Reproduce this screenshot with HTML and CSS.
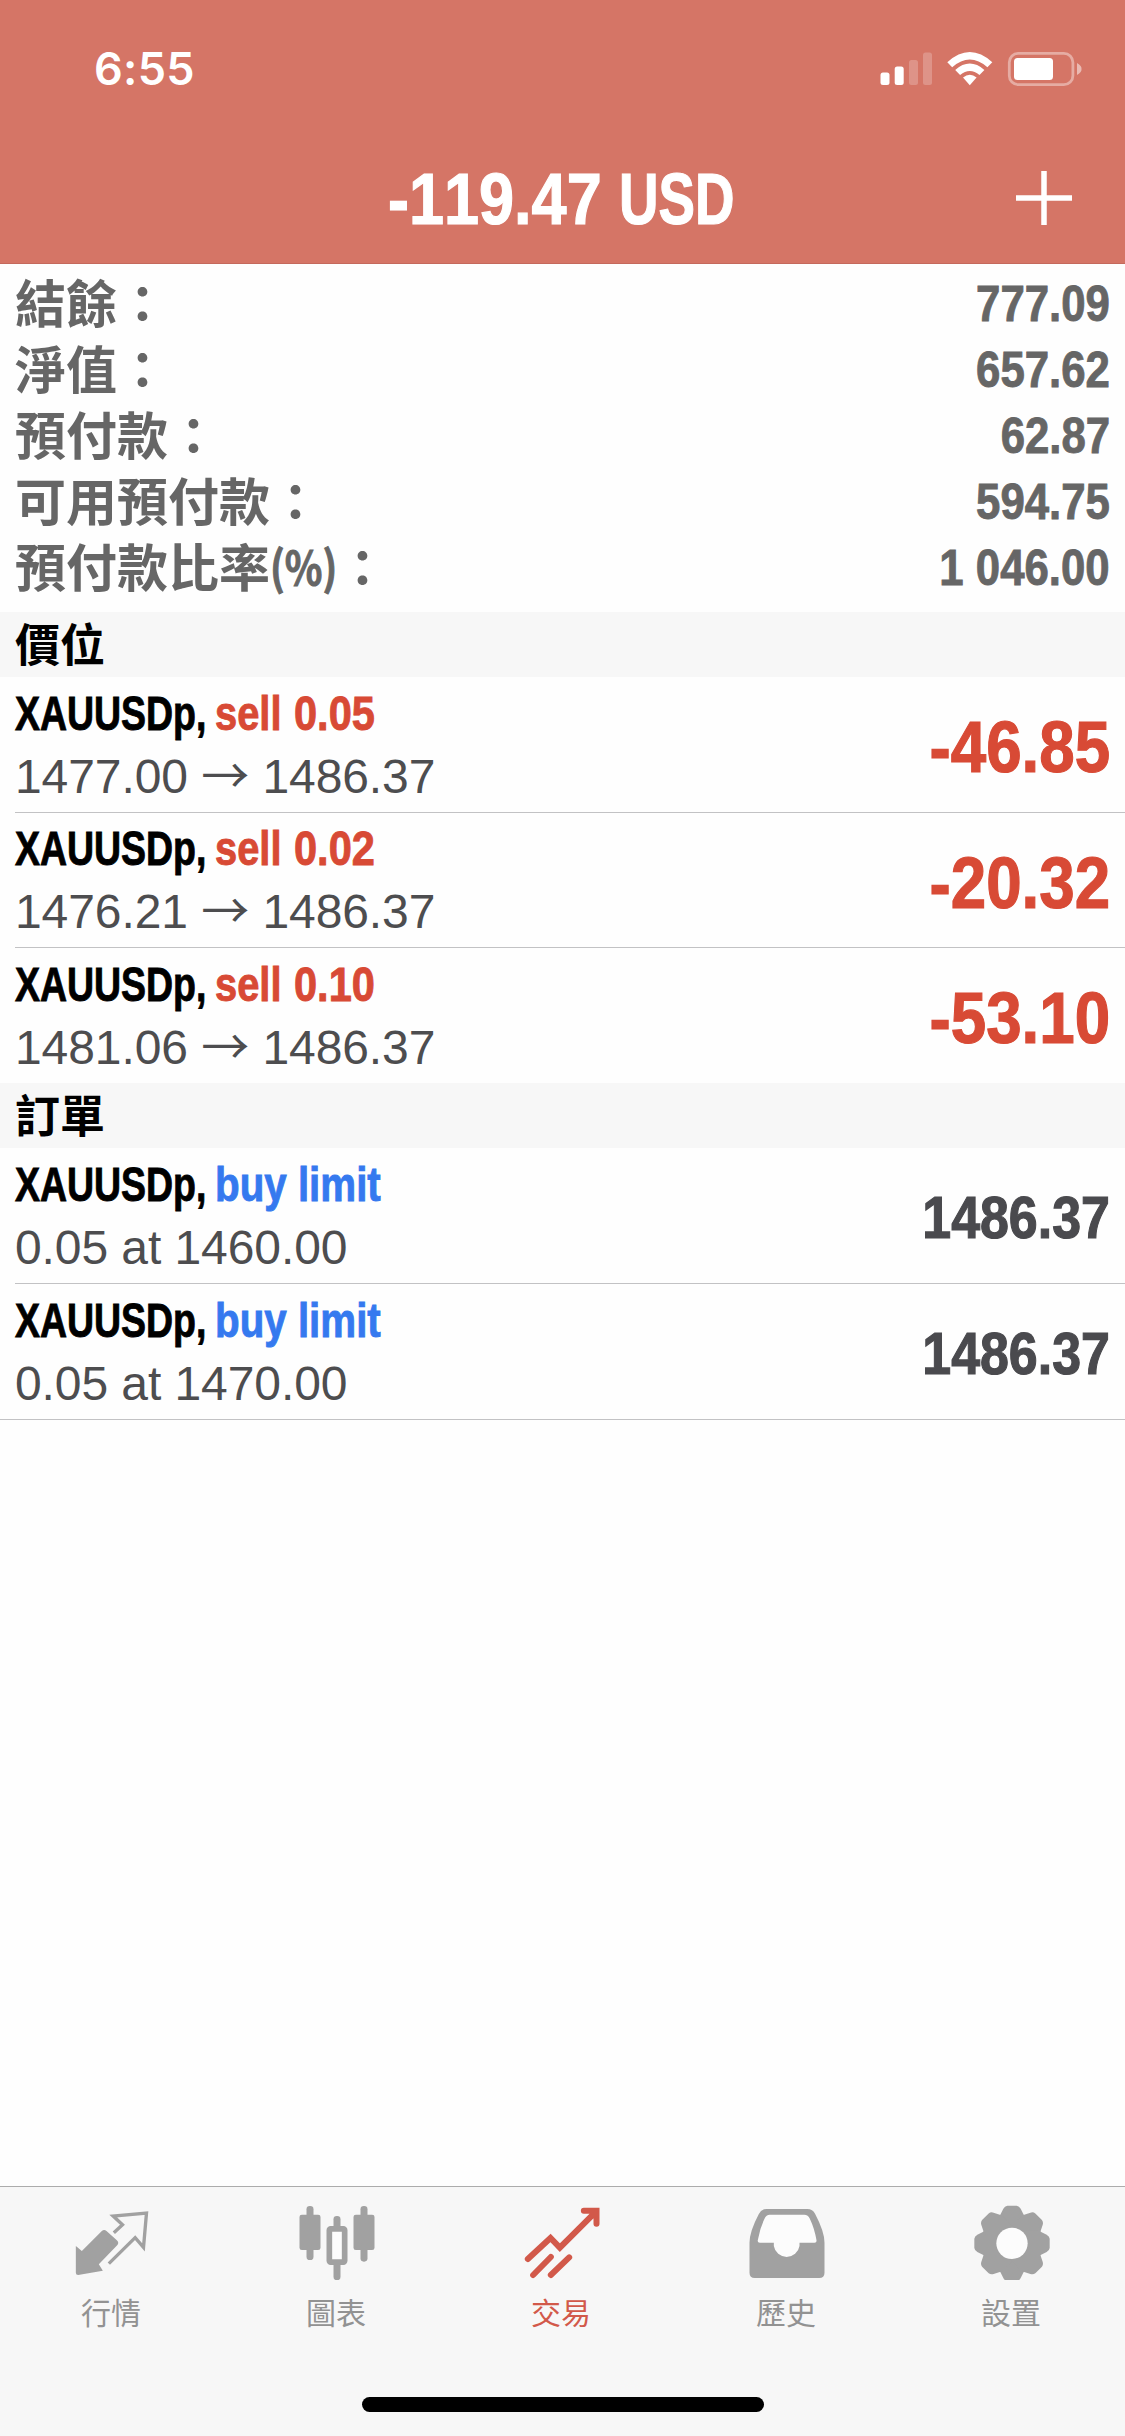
FILE: index.html
```html
<!DOCTYPE html>
<html lang="zh-Hant">
<head>
<meta charset="utf-8">
<title>交易</title>
<link rel="stylesheet" href="styles.css">
</head>
<body>
<div class="screen">
  <header class="header">
    <div class="status">
      <span class="clock">6:55</span>
      <svg class="status-icons" viewBox="0 0 204 36" fill="#fff">
        <rect x="0.5" y="21.5" width="9" height="12.5" rx="2.5"/>
        <rect x="14.7" y="15.5" width="9" height="18.5" rx="2.5"/>
        <g opacity=".22"><rect x="29" y="9" width="9" height="25" rx="2.5"/><rect x="43" y="1.5" width="9" height="32.5" rx="2.5"/></g>
        <path d="M67.3 11.2Q89.8-9.2 112.3 11.2L107.4 16.2Q89.8 0.8 72.2 16.2Z"/>
        <path d="M75.2 19Q89.8 6.2 104.4 19L99.5 24Q89.8 15.8 80.1 24Z"/>
        <path d="M83 26.6Q89.8 20.8 96.6 26.6L89.8 34.2Z"/>
        <rect x="129.3" y="2.3" width="63.6" height="31.4" rx="9" fill="none" stroke="#fff" stroke-width="2.8" opacity=".4"/>
        <rect x="134" y="7" width="39" height="22" rx="3.5"/>
        <path d="M197 12Q202 15 201.5 18Q202 21 197 24Z" opacity=".5"/>
      </svg>
    </div>
    <div class="titlebar">
      <h1 class="title"><span class="num">-119.47</span> <span class="unit">USD</span></h1>
      <svg class="plus" viewBox="0 0 56 56" stroke="#fff" stroke-width="5.5"><path d="M28 1V55M0 28H56"/></svg>
    </div>
  </header>

  <dl class="summary">
    <div class="line"><dt>結餘：</dt><dd>777.09</dd></div>
    <div class="line"><dt>淨值：</dt><dd>657.62</dd></div>
    <div class="line"><dt>預付款：</dt><dd>62.87</dd></div>
    <div class="line"><dt>可用預付款：</dt><dd>594.75</dd></div>
    <div class="line"><dt>預付款比率<span class="percent">(%)</span>：</dt><dd>1 046.00</dd></div>
  </dl>

  <h2 class="section">價位</h2>
  <ul class="list">
    <li class="item"><div class="info"><p class="name"><span class="symbol">XAUUSDp,</span> <span class="sell">sell</span> <span class="lot">0.05</span></p><p class="detail">1477.00 <span class="arrow">→</span> 1486.37</p></div><span class="profit">-46.85</span></li>
    <li class="item"><div class="info"><p class="name"><span class="symbol">XAUUSDp,</span> <span class="sell">sell</span> <span class="lot">0.02</span></p><p class="detail">1476.21 <span class="arrow">→</span> 1486.37</p></div><span class="profit">-20.32</span></li>
    <li class="item"><div class="info"><p class="name"><span class="symbol">XAUUSDp,</span> <span class="sell">sell</span> <span class="lot">0.10</span></p><p class="detail">1481.06 <span class="arrow">→</span> 1486.37</p></div><span class="profit">-53.10</span></li>
  </ul>

  <h2 class="section">訂單</h2>
  <ul class="list orders">
    <li class="item"><div class="info"><p class="name"><span class="symbol">XAUUSDp,</span> <span class="buy">buy limit</span></p><p class="detail">0.05 at 1460.00</p></div><span class="price">1486.37</span></li>
    <li class="item"><div class="info"><p class="name"><span class="symbol">XAUUSDp,</span> <span class="buy">buy limit</span></p><p class="detail">0.05 at 1470.00</p></div><span class="price">1486.37</span></li>
  </ul>

  <footer class="footer">
    <nav class="tabs">
      <a class="tab">
        <svg class="icon" viewBox="82.5 90 270 240" fill="currentColor">
          <path d="M106 228L124 243L184 183Q191 177 198 183L229 211Q237 218 230 226L175 283L187 302L113 315Q106 315 106 308Z"/>
          <path d="M220 188L246 164L218 138L318 129L309 232L284 203L205 281" fill="none" stroke="currentColor" stroke-width="10"/>
        </svg>
        <span>行情</span>
      </a>
      <a class="tab">
        <svg class="icon" viewBox="757.5 90 270 240" fill="currentColor">
          <rect x="777" y="134" width="63" height="106" rx="7"/><rect x="798" y="108" width="21" height="162" rx="10"/>
          <rect x="939" y="134" width="63" height="106" rx="7"/><rect x="960" y="108" width="21" height="167" rx="10"/>
          <rect x="879" y="138" width="21" height="42" rx="10"/><rect x="879" y="272" width="21" height="58" rx="10"/>
          <rect x="866.5" y="176.5" width="46" height="100" rx="4" fill="#fcfcfc" stroke="currentColor" stroke-width="17"/>
        </svg>
        <span>圖表</span>
      </a>
      <a class="tab active">
        <svg class="icon" viewBox="112.5 90 270 240" fill="none" stroke="currentColor" stroke-width="18" stroke-linecap="round">
          <path d="M142 267L210 204L238 233L344 127M310 122H348V161" stroke-linejoin="miter"/>
          <path d="M158 315L211 261M211 315L266 262"/>
        </svg>
        <span>交易</span>
      </a>
      <a class="tab">
        <svg class="icon" viewBox="787.5 90 270 240">
          <path fill="currentColor" d="M858 117H980Q997 117 1004 132Q1032 185 1032 218V308Q1032 324 1016 324H823Q807 324 807 308V218Q807 185 835 132Q842 117 858 117Z"/>
          <path fill="#fcfcfc" d="M868 134H971Q983 134 988 146Q1002 175 1008 211Q1009 218 1002 218H957V228A39 39 0 0 1 880 228V218H838Q830 218 832 210Q838 175 852 146Q857 134 868 134Z"/>
        </svg>
        <span>歷史</span>
      </a>
      <a class="tab">
        <svg class="icon" viewBox="202.5 90 270 240">
          <g transform="translate(334.5 220)" fill="currentColor">
            <circle r="92"/>
            <path id="cog" d="M-38-80L-26-104Q-22-112-14-113H14Q22-112 26-104L38-80V80L26 104Q22 112 14 113H-14Q-22 112-26 104L-38 80Z"/>
            <use href="#cog" transform="rotate(45)"/>
            <use href="#cog" transform="rotate(90)"/>
            <use href="#cog" transform="rotate(135)"/>
            <circle r="47" fill="#fcfcfc"/>
          </g>
        </svg>
        <span>設置</span>
      </a>
    </nav>
    <div class="home"></div>
  </footer>
</div>
</body>
</html>
```
FILE: styles.css
```css
* { box-sizing: border-box; margin: 0; padding: 0; }
body { background: #fefefe; }
.screen {
  width: 1125px;
  height: 2436px;
  display: flex;
  flex-direction: column;
  overflow: hidden;
  font-family: "Liberation Sans", "Noto Sans CJK TC", sans-serif;
  font-kerning: none;
}

.header { height: 264px; background: #d57566; border-bottom: 1px solid #c4695c; color: #fff; flex: none; }
.status { height: 132px; padding: 51px 41px 0 94px; display: flex; justify-content: space-between; align-items: flex-start; }
.clock { font: 600 45px/36px Inter, sans-serif; letter-spacing: 0.3px; }
.status-icons { width: 204px; height: 36px; }
.titlebar { height: 131px; display: grid; grid-template-columns: 1fr auto 1fr; align-items: center; padding: 0 53px; }
.title { grid-column: 2; display: flex; gap: 17px; margin-right: 3px; padding-top: 2px; font: bold 72px/80px "Liberation Sans", sans-serif; font-kerning: none; white-space: nowrap; -webkit-text-stroke: 1.2px; }
.plus { width: 56px; height: 56px; justify-self: end; }

/* Condensed lettering: each run is narrowed from its left or right edge */
.num, .unit, .symbol, .sell, .lot, .buy { display: block; transform-origin: left; }
.num { width: 214px; transform: scaleX(0.875); }
.unit { width: 116px; transform: scaleX(0.76); }

.summary { height: 348px; padding: 6px 15px 0; flex: none; color: #666; }
.line { height: 66px; display: flex; justify-content: space-between; align-items: center; }
.line dt { display: flex; font: bold 51px/62px "Noto Sans CJK TC", sans-serif; padding-bottom: 4px; }
.percent { width: 67px; font-size: 46px; transform: scaleX(0.85); transform-origin: left; -webkit-text-stroke: 1px; }
.line dd { font: bold 50px/64px "Liberation Sans", sans-serif; font-kerning: none; padding-top: 2px; transform: scaleX(0.875); transform-origin: right; -webkit-text-stroke: 0.9px; }

.section { height: 65px; flex: none; padding: 0 0 4px 15px; background: #f7f7f7; font: bold 45px/61px "Noto Sans CJK TC", sans-serif; color: #000; }

.list { list-style: none; padding-left: 15px; }
.item { height: 135px; display: flex; justify-content: space-between; align-items: center; padding-right: 15px; border-bottom: 1px solid #c2c2c4; }
.item:first-child { height: 136px; }
.item:last-child { border-bottom: 0; height: 135px; }
.orders { border-bottom: 1px solid #c2c2c4; }
.name { display: flex; font: bold 48px/63px "Liberation Sans", sans-serif; color: #000; white-space: nowrap; -webkit-text-stroke: 0.9px; }
.symbol { width: 191px; margin-right: 9px; font-kerning: normal; transform: scaleX(0.78); }
.sell { width: 79px; transform: scaleX(0.83); }
.lot { width: 81px; transform: scaleX(0.865); }
.buy { width: 167px; transform: scaleX(0.84); color: #3579ef; }
.detail { font: 48px/63px "Liberation Sans", sans-serif; color: #4d4d4f; white-space: nowrap; letter-spacing: -0.08px; }
.arrow { font: 400 48px/40px "Noto Sans CJK TC", sans-serif; }
.sell, .lot, .profit { color: #d84a35; }
.profit, .price { font: bold 72px/80px "Liberation Sans", sans-serif; font-kerning: none; padding-top: 5px; transform: scaleX(0.885); transform-origin: right; -webkit-text-stroke: 1.2px; }
.price { font-size: 60px; color: #4a4a4e; transform: scaleX(0.865); }

.footer { margin-top: auto; height: 250px; background: #f7f7f7; border-top: 1px solid #acacac; flex: none; }
.tabs { display: grid; grid-template-columns: repeat(5, 225px); padding-top: 13px; height: 210px; }
.tab { display: flex; flex-direction: column; align-items: center; color: #a1a1a1; }
.tab span { font: 30px/44px "Noto Sans CJK TC", sans-serif; margin-top: 9px; margin-right: 3px; color: #929292; }
.tab.active, .tab.active span { color: #d2594a; }
.icon { width: 90px; height: 80px; }
.home { width: 402px; height: 15px; margin: 0 auto; border-radius: 8px; background: #000; }
```
